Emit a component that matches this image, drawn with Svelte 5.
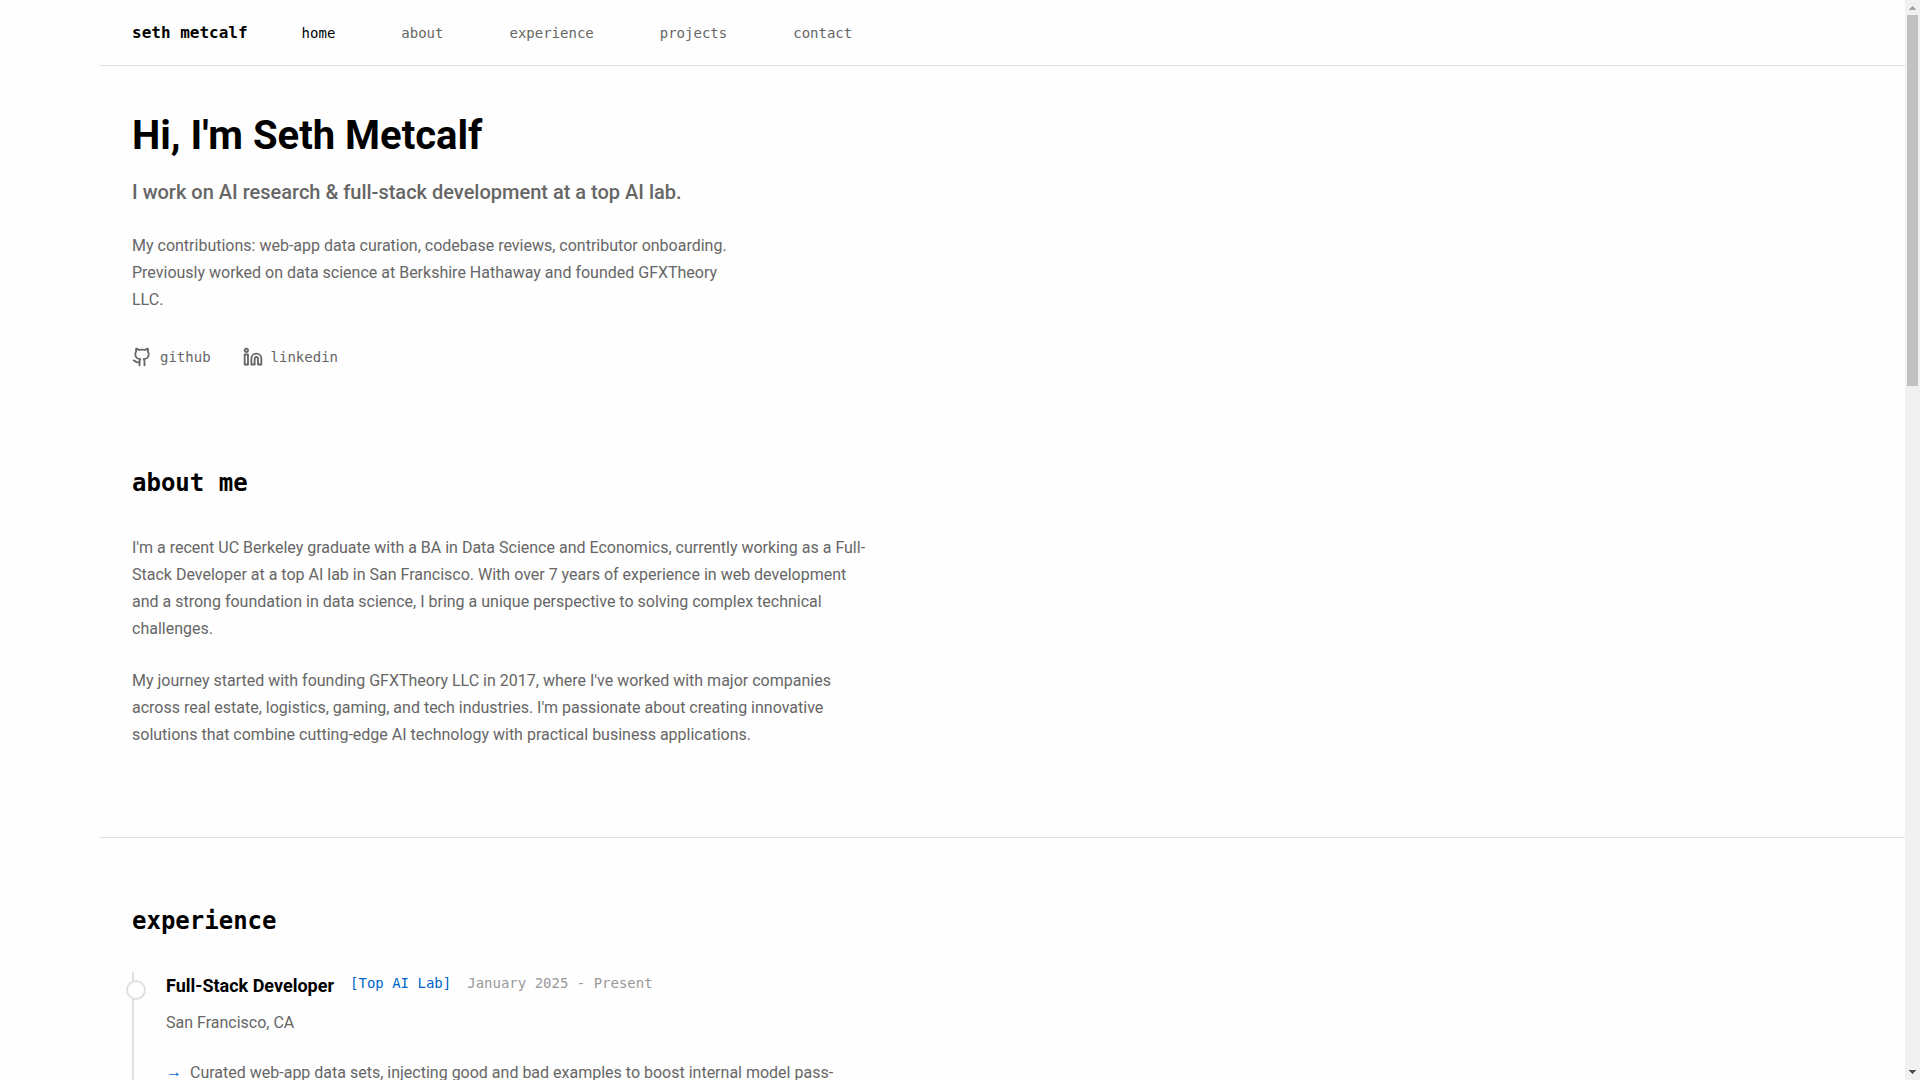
<script>
	let active = $state("home");

	const links = ["home", "about", "experience", "projects", "contact"];

	const about = [
		"I'm a recent UC Berkeley graduate with a BA in Data Science and Economics, currently working as a Full-Stack Developer at a top AI lab in San Francisco. With over 7 years of experience in web development and a strong foundation in data science, I bring a unique perspective to solving complex technical challenges.",
		"My journey started with founding GFXTheory LLC in 2017, where I've worked with major companies across real estate, logistics, gaming, and tech industries. I'm passionate about creating innovative solutions that combine cutting-edge AI technology with practical business applications.",
	];

	const jobs = [
		{
			title: "Full-Stack Developer",
			company: "Top AI Lab",
			date: "January 2025 - Present",
			place: "San Francisco, CA",
			points: ["Curated web-app data sets, injecting good and bad examples to boost internal model pass-"],
		},
	];
</script>

<div class="page">
	<div class="content">
		<nav>
			<a class="logo" href="#home">seth metcalf</a>
			<div class="links">
				{#each links as link}
					<a href="#{link}" class:active={active === link} onclick={() => (active = link)}>{link}</a>
				{/each}
			</div>
		</nav>

		<section class="hero" id="home">
			<h1>Hi, I'm Seth Metcalf</h1>
			<p class="subtitle">I work on AI research & full-stack development at a top AI lab.</p>
			<p class="intro">
				My contributions: web-app data curation, codebase reviews, contributor onboarding. Previously
				worked on data science at Berkshire Hathaway and founded GFXTheory LLC.
			</p>
			<div class="social">
				<a href="#github">
					<svg viewBox="0 0 24 24" aria-hidden="true">
						<path
							d="M15 22v-4a4.8 4.8 0 0 0-1-3.5c3 0 6-2 6-5.5.08-1.25-.27-2.48-1-3.5.28-1.15.28-2.35 0-3.5 0 0-1 0-3 1.5-2.64-.5-5.36-.5-8 0C6 2 5 2 5 2c-.3 1.15-.3 2.35 0 3.5A5.403 5.403 0 0 0 4 9c0 3.5 3 5.5 6 5.5-.39.49-.68 1.05-.85 1.65-.17.6-.22 1.23-.15 1.85v4"
						/>
						<path d="M9 18c-4.51 2-5-2-7-2" />
					</svg>
					github
				</a>
				<a href="#linkedin">
					<svg viewBox="0 0 24 24" aria-hidden="true">
						<path
							d="M16 8a6 6 0 0 1 6 6v7h-4v-7a2 2 0 0 0-2-2 2 2 0 0 0-2 2v7h-4v-7a6 6 0 0 1 6-6z"
						/>
						<rect x="2" y="9" width="4" height="12" />
						<circle cx="4" cy="4" r="2" />
					</svg>
					linkedin
				</a>
			</div>
		</section>

		<section id="about">
			<h2>about me</h2>
			{#each about as text}
				<p class="text">{text}</p>
			{/each}
		</section>

		<section class="divided" id="experience">
			<h2>experience</h2>
			<div class="timeline">
				{#each jobs as job}
					<article>
						<header>
							<h3>{job.title}</h3>
							<span class="company">[{job.company}]</span>
							<span class="date">{job.date}</span>
						</header>
						<p class="place">{job.place}</p>
						<ul>
							{#each job.points as point}
								<li>{point}</li>
							{/each}
						</ul>
					</article>
				{/each}
			</div>
		</section>
	</div>

	<div class="scrollbar" aria-hidden="true">
		<svg class="up" viewBox="0 0 15 15" shape-rendering="crispEdges">
			<path d="M7 6h1v1h1v1h1v1h1v1H4V9h1V8h1V7h1z" />
		</svg>
		<div class="track"><div class="thumb"></div></div>
		<svg class="down" viewBox="0 0 15 15" shape-rendering="crispEdges">
			<path d="M4 5h7v1h-1v1H9v1H8v1H7V8H6V7H5V6H4z" />
		</svg>
	</div>
</div>

<style>
	:global(body) {
		margin: 0;
		background: #fefefe;
	}

	.page {
		--mono: "DejaVu Sans Mono", monospace;
		--muted: #666;
		--line: #e0e0e0;
		display: grid;
		grid-template-columns: 1fr 15px;
		height: 100vh;
		overflow: hidden;
		color: #000;
		font: 16px/26px Roboto, sans-serif;
	}

	.content {
		margin-left: 100px;
		min-width: 0;
		min-height: 0;
		overflow: hidden;
	}

	h1,
	h2,
	h3,
	p,
	ul {
		margin: 0;
		padding: 0;
	}

	a {
		color: var(--muted);
		text-decoration: none;
	}

	nav {
		display: flex;
		align-items: baseline;
		gap: 54px;
		padding: 20px 32px 19px;
		border-bottom: 1px solid var(--line);
		font-family: var(--mono);
	}

	.logo {
		color: #000;
		font-weight: 700;
	}

	.links {
		display: flex;
		gap: 66px;
		font-size: 14px;
	}

	.links a.active {
		color: #000;
	}

	section {
		padding: 64px 32px;
	}

	.hero {
		padding: 46px 32px 32px;
	}

	h1 {
		margin-bottom: 17px;
		font-size: 40px;
		font-weight: 700;
		line-height: 48px;
	}

	.subtitle {
		margin-bottom: 25px;
		color: var(--muted);
		font-size: 20px;
		font-weight: 500;
		line-height: 30px;
	}

	.intro {
		max-width: 600px;
		margin-bottom: 33px;
		color: var(--muted);
		line-height: 27px;
	}

	.social {
		display: flex;
		gap: 32px;
		font: 14px/22px var(--mono);
	}

	.social a {
		display: flex;
		align-items: center;
		gap: 8px;
	}

	.social svg {
		width: 20px;
		height: 20px;
		fill: none;
		stroke: currentColor;
		stroke-width: 2.2;
		stroke-linecap: round;
		stroke-linejoin: round;
	}

	h2 {
		margin-bottom: 32px;
		font: 700 24px/38px var(--mono);
	}

	.text {
		max-width: 736px;
		margin-bottom: 25px;
		color: var(--muted);
		line-height: 27px;
	}

	.divided {
		border-top: 1px solid var(--line);
	}

	.timeline {
		max-width: 702px;
		padding-left: 32px;
		border-left: 2px solid var(--line);
	}

	article {
		position: relative;
	}

	/* marker on the timeline */
	article::before {
		content: "";
		position: absolute;
		top: 8px;
		left: -40px;
		box-sizing: border-box;
		width: 20px;
		height: 20px;
		border: 2px solid var(--line);
		border-radius: 50%;
		background: #fefefe;
	}

	article header {
		display: flex;
		align-items: flex-start;
		gap: 16px;
		margin-bottom: 11px;
		font: 14px/22px var(--mono);
	}

	h3 {
		font: 700 18px/27px Roboto, sans-serif;
	}

	.company {
		color: #06c;
	}

	.date {
		color: #999;
	}

	.place {
		margin-bottom: 24px;
		color: var(--muted);
	}

	ul {
		list-style: none;
	}

	li {
		position: relative;
		padding-left: 24px;
		color: var(--muted);
	}

	li::before {
		content: "→";
		position: absolute;
		left: 0;
		color: #06c;
		line-height: 24px;
	}

	.scrollbar {
		display: flex;
		flex-direction: column;
		background: #f1f1f1;
	}

	.scrollbar svg {
		width: 15px;
		height: 15px;
	}

	.up {
		fill: #a3a3a3;
	}

	.down {
		fill: #505050;
	}

	.track {
		flex: 1;
		padding: 0 2px;
	}

	.thumb {
		height: 35.3%;
		background: #c1c1c1;
	}
</style>
